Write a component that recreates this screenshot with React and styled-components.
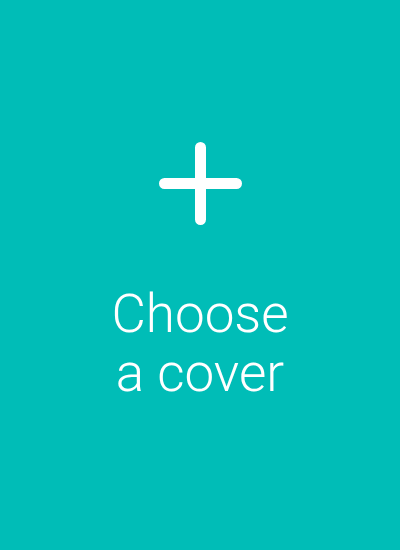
import React from "react";
import styled, { createGlobalStyle } from "styled-components";

const GlobalStyle = createGlobalStyle`
    html, body {
        margin: 0;
        padding: 0;
        background: #00bdb7;
    }
`;

const Cover = styled.button`
    width: 400px;
    height: 550px;
    border: none;
    margin: 0;
    padding: 142px 0 0;
    background: #00bdb7;
    color: #ffffff;
    display: flex;
    flex-direction: column;
    align-items: center;
    cursor: pointer;
    font-family: Roboto, "Liberation Sans", sans-serif;
`;

const PlusIcon = styled.svg`
    width: 83px;
    height: 83px;
    display: block;
`;

const Label = styled.span`
    margin-top: 60px;
    font-size: 53px;
    font-weight: 300;
    line-height: 59px;
    text-align: center;
`;

const App = () => {
    return (
        <>
            <GlobalStyle />
            <Cover type="button">
                <PlusIcon viewBox="0 0 83 83" aria-hidden="true">
                    <path
                        d="M41.5 5.5v72M5.5 41.5h72"
                        stroke="#ffffff"
                        strokeWidth="11"
                        strokeLinecap="round"
                        fill="none"
                    />
                </PlusIcon>
                <Label>
                    Choose
                    <br />a cover
                </Label>
            </Cover>
        </>
    );
};

export default App;
